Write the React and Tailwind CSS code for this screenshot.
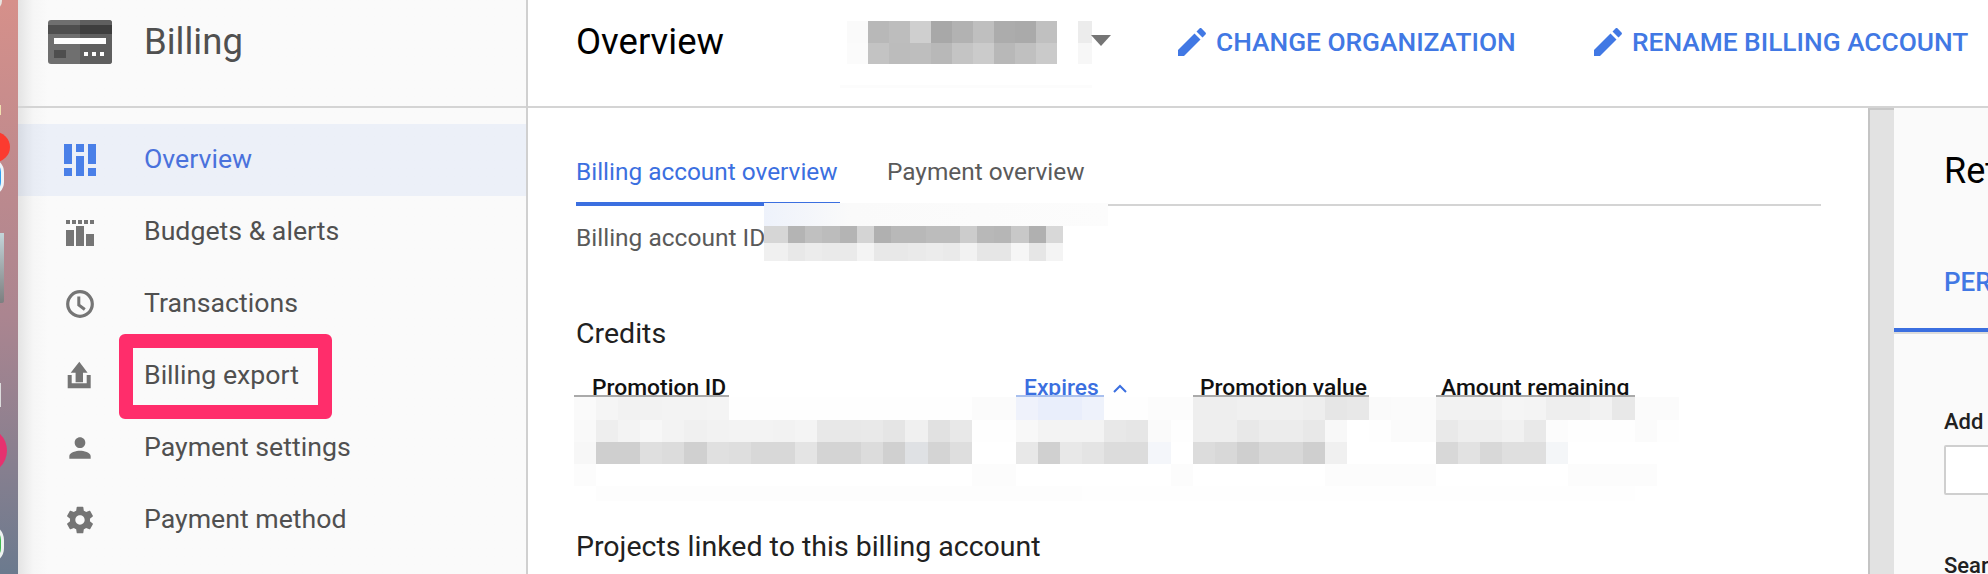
import React from 'react';

const BLUE = 'text-[#4178e4]';

// grey levels as two hex digits, or a full six digit colour, one token per cell
const hex = (s) => s.split(' ').map(t => (t.length === 2 ? `#${t}${t}${t}` : `#${t}`));

const headerMosaic = [
  'fa b8 bd cf a8 b2 bf ac aa c0 ff ec',
  'fb c3 bc be b8 c4 cb b8 c0 ca ff f7',
];

const idMosaic = [
  'd6 b4 c0 bc b4 d4 b0 b8 b8 bc bc cc b8 b6 c8 b0 d8',
  'f0 e8 ec ea ea f4 e8 e8 ea ec ea f2 e6 e6 f6 e6 f4',
];

const tableMosaic = [
  'aa aa aa aa aa aa aa ff ff ff ff ff ff ff ff ff ff ff ff ff a9c0ee a9c0ee a9c0ee a9c0ee ff ff ff ff aa aa aa aa aa aa aa aa ff ff ff aa aa aa aa aa aa aa aa aa ff ff',
  'fa f5 f2 f2 f3 f3 f4 fe fe fe fe fe fe fe fe fe fe fe fb fb eff2fb e9eefb e9eefb eef2fb fe fe fc fc ee ee f0 f0 f0 ee e6 e8 fa fb fb f2 f2 f2 f5 f4 ee ee f2 e8 fb fb',
  'f9 ee f3 f7 f3 f0 f2 f3 f3 f2 f4 e8 e8 e9 e5 f0 e1 e8 fe fe f8 f3 f3 f3 e8 e6 fa fe ee ee e8 ec ec e8 f8 ff fe fb fb e9 ee ee f1 e9 fc fe fe fe fb fe',
  'f7 cf cf df dc d0 e0 de d8 d8 e4 d4 d4 dc d0 dfe1e4 d4 de ff ff e8 d0 e8 e4 dc dc f4f6fa ff dc d8 cf d8 d8 cf f0 ff ff ff ff d8 e2 d8 df df f4f6f8 ff ff ff ff ff',
  'fc ff ff ff ff ff ff ff ff ff ff ff ff ff ff ff ff ff fc fc ff ff ff ff ff ff ff fc ff ff ff ff ff ff fc fc fc fc fc ff ff ff ff ff ff fc fc fc fc ff',
  'ff fd fd fd fd fd fd fd fd fd fd fd fd fd fd fd fd fd fd fd fd fd fd fe fe fe fe fe fe fe fe fe fe fe fe fe fe fe fe fe fe fe fe fe fe fe fe fe ff ff',
];

const Cells = ({ rows }) =>
  rows.flatMap((row, r) =>
    hex(row).map((c, i) => <div key={`${r}-${i}`} style={{ backgroundColor: c }} />)
  );

const Path = ({ d, className }) => (
  <svg viewBox="0 0 24 24" className={className} fill="currentColor"><path d={d} /></svg>
);

const OverviewIcon = () => (
  <svg viewBox="0 0 32 32" className="w-8 h-8 text-[#4a80e8]" fill="currentColor">
    <path d="M0 0h8v20H0zM0 24h8v8H0zM12 0h8v8h-8zM12 12h8v20h-8zM24 0h8v20h-8zM24 24h8v8h-8z" />
  </svg>
);

const BudgetsIcon = () => (
  <svg viewBox="0 0 32 32" className="w-8 h-8 text-[#757575]" fill="currentColor">
    <path d="M2 4h4v4H2zM8 4h4v4H8zM14 4h4v4h-4zM20 4h4v4h-4zM26 4h4v4h-4zM2 14h8v16H2zM12 10h8v20h-8zM22 18h8v12h-8z" />
  </svg>
);

const ClockIcon = () => (
  <svg viewBox="0 0 32 32" className="w-8 h-8 text-[#757575]" fill="none" stroke="currentColor">
    <circle cx="16" cy="16" r="12.300" strokeWidth="3.200" />
    <path d="M14.800 8.500v8.500l6 4.500" strokeWidth="3" />
  </svg>
);

const ExportIcon = () => (
  <svg viewBox="0 0 32 32" className="w-8 h-8 text-[#757575]" fill="currentColor">
    <path d="M15.300 1.700l8.300 11H19v9.600h-7.400v-9.600H6.700zM3.700 15h4v8.300h15V15h4v13.300h-23z" />
  </svg>
);

const PersonIcon = () => (
  <Path className="w-9 h-9 text-[#757575]" d="M12 12c2.21 0 4-1.790 4-4s-1.790-4-4-4-4 1.790-4 4 1.790 4 4 4zm0 2c-2.670 0-8 1.340-8 4v2h16v-2c0-2.660-5.330-4-8-4z" />
);

const GearIcon = () => (
  <Path className="w-[34px] h-[34px] text-[#757575]" d="M19.43 12.98c.04-.32.07-.64.07-.98s-.03-.66-.07-.98l2.11-1.65c.19-.15.24-.42.12-.64l-2-3.46c-.12-.22-.39-.3-.61-.22l-2.49 1c-.52-.4-1.08-.73-1.69-.98l-.38-2.65C14.46 2.18 14.25 2 14 2h-4c-.25 0-.46.18-.49.42l-.38 2.65c-.61.25-1.17.59-1.69.98l-2.49-1c-.23-.09-.49 0-.61.22l-2 3.46c-.13.22-.07.49.12.64l2.11 1.65c-.04.32-.07.65-.07.98s.03.66.07.98l-2.11 1.65c-.19.15-.24.42-.12.64l2 3.46c.12.22.39.3.61.22l2.49-1c.52.4 1.08.73 1.69.98l.38 2.65c.03.24.24.42.49.42h4c.25 0 .46-.18.49-.42l.38-2.65c.61-.25 1.17-.59 1.69-.98l2.49 1c.23.09.49 0 .61-.22l2-3.46c.12-.22.07-.49-.12-.64l-2.11-1.65zM12 15.5c-1.93 0-3.5-1.57-3.5-3.5s1.57-3.5 3.5-3.5 3.5 1.57 3.5 3.5-1.57 3.5-3.5 3.5z" />
);

const PencilIcon = () => (
  <svg viewBox="0 0 28 28" className="w-7 h-7 shrink-0" fill="currentColor">
    <path d="M0 28v-6L16.5 5.500l6 6L6 28zM18.500 3.500L21.500.500c.6-.6 1.500-.6 2.100 0l3.900 3.900c.6.6.6 1.500 0 2.100l-3 3z" />
  </svg>
);

const CardLogo = () => (
  <svg viewBox="0 0 64 44" className="w-16 h-11">
    <rect width="64" height="44" rx="3" fill="#6f6f6f" />
    <path d="M32 0h29a3 3 0 0 1 3 3v38a3 3 0 0 1-3 3H32z" fill="#5f5f5f" />
    <path d="M0 5h32v9H0z" fill="#4e4e4e" />
    <path d="M32 5h32v9H32z" fill="#3e3e3e" />
    <path d="M6 18h52v6H6z" fill="#fff" />
    <path d="M6 30h12v8H6z" fill="#4e4e4e" />
    <path d="M36 32h4v4h-4zM44 32h4v4h-4zM52 32h4v4h-4z" fill="#fff" />
  </svg>
);

const navItems = [
  { label: 'Overview', icon: <OverviewIcon />, active: true },
  { label: 'Budgets & alerts', icon: <BudgetsIcon /> },
  { label: 'Transactions', icon: <ClockIcon /> },
  { label: 'Billing export', icon: <ExportIcon /> },
  { label: 'Payment settings', icon: <PersonIcon /> },
  { label: 'Payment method', icon: <GearIcon /> },
];

const App = () => {
  return (
    <div className="relative flex w-[1988px] h-[574px] overflow-hidden bg-white font-['Roboto',sans-serif]">
      {/* desktop peeking out on the left */}
      <div className="relative w-[18px] shrink-0 overflow-hidden bg-gradient-to-b from-[#d6908a] via-[#ab8590] via-[55%] to-[#6b7a8e]">
        <div className="absolute -left-4 -top-2 w-[18px] h-[18px] rounded-full bg-[#e8e4e0]" />
        <div className="absolute left-0 top-[105px] w-px h-[10px] bg-[#f0e0b0]" />
        <div className="absolute -left-6 top-[158px] w-7 h-[38px] rounded-full border-[3px] border-[#eef2f6] bg-[#2f9df0]" />
        <div className="absolute -left-5 top-[132px] w-[30px] h-[30px] rounded-full bg-[#fb3b30]" />
        <div className="absolute left-0 top-[233px] w-1 h-[70px] rounded-br-[2px] bg-gradient-to-b from-[#c4d6da] to-[#7d7f80]" />
        <div className="absolute left-0 top-[383px] w-px h-[24px] bg-[#dcdcdc]" />
        <div className="absolute -left-10 top-[427px] w-[47px] h-[47px] rounded-full bg-[#e6326f]" />
        <div className="absolute -left-7 top-[524px] w-8 h-10 rounded-full border-[3px] border-[#eef2f0] bg-[#3fb950]" />
      </div>

      {/* sidebar */}
      <aside className="w-[510px] shrink-0 flex flex-col border-r-2 border-[#d0d0d0] bg-[#fafafa] bg-gradient-to-r from-[#e4e4e4] via-[#f6f6f6] via-[3%] to-[#fafafa] to-[6%]">
        <div className="h-[108px] shrink-0 flex items-start pt-5 pl-[30px] border-b-2 border-[#d4d4d4]">
          <CardLogo />
          <span className="ml-[32px] text-[36.5px] leading-[44px] text-[#505050]">Billing</span>
        </div>
        <nav className="pt-4">
          {navItems.map(item => (
            <div
              key={item.label}
              className={`flex items-center h-[72px] ${item.active ? 'bg-[#2f62e0]/[0.065]' : ''}`}
            >
              <div className="w-[126px] pl-[46px] shrink-0">
                <div className="w-8 flex items-center justify-center">{item.icon}</div>
              </div>
              <span className={`-mt-[2px] text-[26.7px] ${item.active ? 'text-[#4a72dc]' : 'text-[#505050]'}`}>{item.label}</span>
            </div>
          ))}
        </nav>
      </aside>

      {/* main column */}
      <div className="flex-1 min-w-0 flex flex-col">
        <header className="h-[108px] shrink-0 flex items-start border-b-2 border-[#d4d4d4] pl-[48px] whitespace-nowrap">
          <h1 className="mt-[20px] w-[602px] text-[36.5px] leading-[44px] text-black">Overview</h1>
          <div className={`w-[416px] mt-[28px] flex items-center gap-[10px] text-[26.3px] leading-7 font-medium ${BLUE}`}>
            <PencilIcon />
            CHANGE ORGANIZATION
          </div>
          <div className={`mt-[28px] flex items-center gap-[10px] text-[26.3px] leading-7 font-medium ${BLUE}`}>
            <PencilIcon />
            RENAME BILLING ACCOUNT
          </div>
        </header>

        <div className="flex-1 flex min-h-0">
          <main className="relative flex-1 min-w-0 pl-[48px] pt-[46px]">
            <div className="flex w-[1245px] border-b-2 border-[#d4d4d4] h-[52px] text-[24.4px] leading-[36px] whitespace-nowrap">
              <div className="w-[264px] h-[52px] border-b-[4px] border-[#3b6fe0] text-[#3b6fe0]">Billing account overview</div>
              <div className="ml-[47px] text-[#5a5a5a]">Payment overview</div>
            </div>
            <div className="mt-[16px] text-[24.5px] leading-8 text-[#5a5a5a]">Billing account ID</div>

            <h2 className="mt-[62px] text-[28.5px] leading-9 text-[#212121]">Credits</h2>
            <div className="mt-[21px] h-[30px] flex text-[22.8px] leading-[30px] font-medium text-[#111]">
              <div className="w-[448px] pl-[16px]">Promotion ID</div>
              <div className="w-[176px] text-[#3b6fe0] flex items-center gap-[14px]">
                Expires
                <svg viewBox="0 0 14 9" className="w-[14px] h-[9px]" fill="none" stroke="currentColor" strokeWidth="2"><path d="M1 8l6-6 6 6" /></svg>
              </div>
              <div className="w-[241px]">Promotion value</div>
              <div>Amount remaining</div>
            </div>
            <h2 className="mt-[126px] text-[28.5px] leading-9 text-[#212121]">Projects linked to this billing account</h2>

            {/* redacted values, pixelated over the page */}
            <div className="absolute left-[236px] top-[95px] w-[344px] h-[23px] bg-gradient-to-r from-[#eef2fb] via-[#fafafa] via-[25%] to-[#fcfcfc]" />
            <div className="absolute left-[236px] top-[118px] grid grid-cols-[24px_repeat(16,17.2px)] grid-rows-[17px_18px]">
              <Cells rows={idMosaic} />
            </div>
            <div className="absolute left-[46px] top-[287px] grid grid-cols-[repeat(50,22.1px)] grid-rows-[2px_23px_22px_22px_22px_15px]">
              <Cells rows={tableMosaic} />
            </div>
          </main>

          {/* scrollbar + side panel */}
          <div className="w-[26px] shrink-0 bg-[#e2e2e2] border-l-2 border-t-2 border-t-[#c8c8c8] border-l-[#c4c4c4]" />
          <aside className="w-[94px] shrink-0 bg-[#fafafa] overflow-hidden whitespace-nowrap">
            <div className="pl-[50px] pt-[44px] text-[36px] leading-[38px] text-black">Ret</div>
            <div className="mt-[74px] pl-[50px] h-[64px] text-[26px] leading-[36px] font-medium text-[#4178e4]">PERMISSIONS</div>
            <div className="h-[6px] border-t-4 border-[#3b6fe0] bg-[#dcdcdc]" />
            <div className="pl-[50px] mt-[73px] text-[22px] leading-[30px] font-medium text-[#212121]">Add members</div>
            <div className="ml-[50px] mt-[8px] w-[200px] h-[50px] bg-white border-2 border-[#cfcfcf] rounded-[2px]" />
            <div className="pl-[50px] mt-[56px] text-[22px] leading-[30px] font-medium text-[#212121]">Search members</div>
          </aside>
        </div>
      </div>

      {/* account selector mosaic in the header */}
      <div className="absolute left-[847px] top-[21px] grid grid-cols-[repeat(10,21px)_21px_14px] grid-rows-[22px_21px]">
        <Cells rows={headerMosaic} />
      </div>
      <div className="absolute left-[840px] top-[85px] w-[252px] h-[3px] bg-[#fcfcfc]" />
      <div className="absolute left-[1091px] top-[35px] w-0 h-0 border-x-[10px] border-x-transparent border-t-[11px] border-t-[#757575]" />

      {/* annotation */}
      <div className="absolute left-[119px] top-[334px] w-[213px] h-[85px] border-[14px] border-[#ff2d6b] rounded-[6px]" />
    </div>
  );
};

export default App;
